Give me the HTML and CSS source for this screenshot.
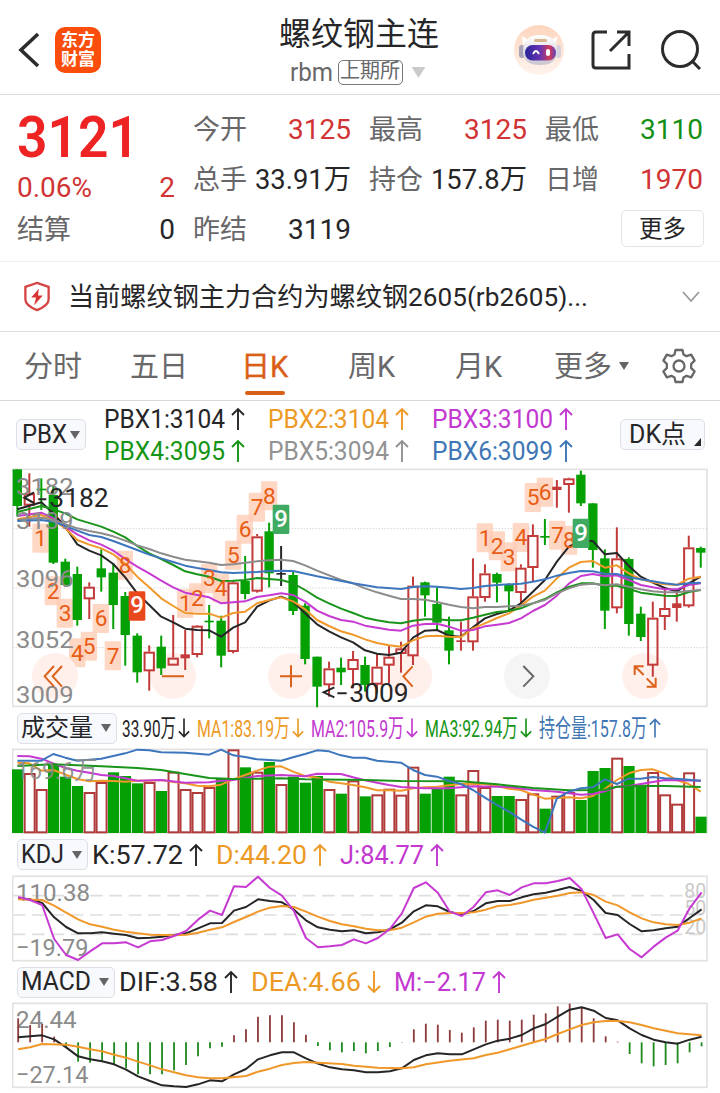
FILE: index.html
```html
<!DOCTYPE html>
<html lang="zh-CN">
<head>
<meta charset="utf-8">
<title>螺纹钢主连</title>
<link rel="stylesheet" href="styles.css">
</head>
<body>
<svg class="defs" aria-hidden="true">
  <symbol id="up" viewBox="0 0 14 24"><path d="M7 23V2M1 8l6-6 6 6"/></symbol>
  <symbol id="down" viewBox="0 0 14 24"><path d="M7 1v21M1 16l6 6 6-6"/></symbol>
  <symbol id="tri" viewBox="0 0 10 8"><path d="M0 0h10L5 8z"/></symbol>
</svg>

<header class="topbar">
  <svg class="back" viewBox="0 0 22 38"><path d="M20 3L3 19l17 16"/></svg>
  <div class="logo"><span>东方</span><span>财富</span></div>
  <div class="heading">
    <h1>螺纹钢主连</h1>
    <div class="sub"><span data-width="43">rbm</span><span class="exchange">上期所</span><svg class="tri-light"><use href="#tri"/></svg></div>
  </div>
  <svg class="robot" viewBox="0 0 50 50">
    <defs>
      <linearGradient id="visor"><stop offset="0" stop-color="#28249a"/><stop offset=".5" stop-color="#6b35b0"/><stop offset=".8" stop-color="#d23c58"/><stop offset="1" stop-color="#5a3fc0"/></linearGradient>
      <linearGradient id="halo" x2="0" y2="1"><stop offset="0" stop-color="#fdd5bd"/><stop offset="1" stop-color="#fff4ee"/></linearGradient>
      <linearGradient id="helmet" x2="0" y2="1"><stop offset="0" stop-color="#fff"/><stop offset="1" stop-color="#c9c5d2"/></linearGradient>
    </defs>
    <circle cx="25" cy="25" r="25" fill="url(#halo)"/>
    <path d="M9 20L8 11l6 4zM41 20l3-9-7 4z" fill="#fff"/>
    <rect x="5" y="20" width="6" height="13" rx="3" fill="#a7a3b5"/><rect x="42" y="20" width="5" height="13" rx="2.500" fill="#d5d1de"/>
    <path d="M9 26C9 15 15 10 26 10s17 5 17 16c0 10-6 14-17 14S9 36 9 26z" fill="url(#helmet)"/>
    <rect x="20" y="14" width="13" height="3" rx="1.500" fill="#d8b68d"/>
    <rect x="11" y="20" width="31" height="15.500" rx="7.700" fill="url(#visor)"/>
    <path d="M19 29q3-6 6 0" fill="none" stroke="#fff" stroke-width="1.800"/><rect x="32" y="24" width="4" height="7" rx="2" fill="#fff"/>
  </svg>
  <svg class="share" viewBox="0 0 40 40"><path d="M16 2H5q-3 0-3 3v30q0 3 3 3h33V24M26 2h12v14M38 2L19 21"/></svg>
  <svg class="search" viewBox="0 0 40 40"><circle cx="19" cy="19" r="17.500"/><path d="M31 31l8 8"/></svg>
</header>

<section class="quote">
  <div class="col">
    <div class="cell last up"><b data-width="122">3121</b></div>
    <div class="cell up change"><span data-width="75">0.06%</span><span>2</span></div>
    <div class="cell"><label>结算</label><span>0</span></div>
  </div>
  <div class="col">
    <div class="cell"><label>今开</label><span class="up">3125</span></div>
    <div class="cell"><label>总手</label><span data-width="96">33.91万</span></div>
    <div class="cell"><label>昨结</label><span>3119</span></div>
  </div>
  <div class="col">
    <div class="cell"><label>最高</label><span class="up">3125</span></div>
    <div class="cell"><label>持仓</label><span data-width="96">157.8万</span></div>
  </div>
  <div class="col">
    <div class="cell"><label>最低</label><span class="down">3110</span></div>
    <div class="cell"><label>日增</label><span class="up">1970</span></div>
    <div class="cell end"><button class="more">更多</button></div>
  </div>
</section>

<section class="notice">
  <svg class="shield" viewBox="0 0 28 32"><path d="M14 2l12 4v13q0 6-12 11Q2 25 2 19V6z"/><path class="bolt" d="M16 8l-8 9h5l-2 8 9-10h-5z"/></svg>
  <span class="notice-text" data-width="520">当前螺纹钢主力合约为螺纹钢2605(rb2605)...</span>
  <svg class="chev" viewBox="0 0 18 12"><path d="M1 1l8 9 8-9"/></svg>
</section>

<nav class="tabs">
  <a>分时</a><a>五日</a><a class="active">日K</a><a>周K</a><a>月K</a>
  <a>更多<svg class="tri"><use href="#tri"/></svg></a>
  <svg class="gear" viewBox="0 0 36 36"><path d="M14.500 2h7l1 4.500 3 1.700 4.700-1.600 3.400 6-3.400 3.200v4.400l3.400 3.200-3.400 6-4.700-1.600-3 1.700-1 4.500h-7l-1-4.500-3-1.700-4.700 1.600-3.400-6 3.400-3.200v-4.400l-3.400-3.200 3.400-6 4.700 1.600 3-1.700z"/><circle cx="18" cy="18" r="5.500"/></svg>
</nav>

<section class="pbx">
  <button class="pick"><span data-width="45">PBX</span><svg class="tri"><use href="#tri"/></svg></button>
  <div class="pbx-grid">
    <span class="c-black"><i data-width="121">PBX1:3104</i><svg class="arrow"><use href="#up"/></svg></span>
    <span class="c-orange"><i data-width="121">PBX2:3104</i><svg class="arrow"><use href="#up"/></svg></span>
    <span class="c-magenta"><i data-width="121">PBX3:3100</i><svg class="arrow"><use href="#up"/></svg></span>
    <span class="c-green"><i data-width="121">PBX4:3095</i><svg class="arrow"><use href="#up"/></svg></span>
    <span class="c-gray"><i data-width="121">PBX5:3094</i><svg class="arrow"><use href="#up"/></svg></span>
    <span class="c-blue"><i data-width="121">PBX6:3099</i><svg class="arrow"><use href="#up"/></svg></span>
  </div>
  <button class="pick dk"><span data-width="57">DK点</span><svg class="corner" viewBox="0 0 7 8"><path d="M7 0v8H0z"/></svg></button>
</section>

<svg class="chart" id="price" viewBox="36 24 2088 720" height="240"></svg>

<section class="legend vol">
  <button class="pick"><span data-width="72">成交量</span><svg class="tri"><use href="#tri"/></svg></button>
  <span class="c-black"><i data-width="54">33.90万</i><svg class="arrow"><use href="#down"/></svg></span>
  <span class="c-orange"><i data-width="93">MA1:83.19万</i><svg class="arrow"><use href="#down"/></svg></span>
  <span class="c-magenta"><i data-width="93">MA2:105.9万</i><svg class="arrow"><use href="#down"/></svg></span>
  <span class="c-green"><i data-width="93">MA3:92.94万</i><svg class="arrow"><use href="#down"/></svg></span>
  <span class="c-blue"><i data-width="108">持仓量:157.8万</i><svg class="arrow"><use href="#up"/></svg></span>
</section>
<svg class="chart" id="volume" viewBox="36 114 2088 258" height="86"></svg>

<section class="legend kdj">
  <button class="pick"><span data-width="43">KDJ</span><svg class="tri"><use href="#tri"/></svg></button>
  <span class="c-black"><i data-width="91">K:57.72</i><svg class="arrow"><use href="#up"/></svg></span>
  <span class="c-orange"><i data-width="91">D:44.20</i><svg class="arrow"><use href="#up"/></svg></span>
  <span class="c-magenta"><i data-width="84">J:84.77</i><svg class="arrow"><use href="#up"/></svg></span>
</section>
<svg class="chart" id="kdj" viewBox="36 120 2088 261" height="87"></svg>

<section class="legend macd">
  <button class="pick"><span data-width="70">MACD</span><svg class="tri"><use href="#tri"/></svg></button>
  <span class="c-black"><i data-width="99">DIF:3.58</i><svg class="arrow"><use href="#up"/></svg></span>
  <span class="c-orange"><i data-width="110">DEA:4.66</i><svg class="arrow"><use href="#down"/></svg></span>
  <span class="c-magenta"><i data-width="92">M:−2.17</i><svg class="arrow"><use href="#up"/></svg></span>
</section>
<svg class="chart" id="macd" viewBox="36 501 2088 264" height="88"></svg>
<script src="charts.js"></script>
</body>
</html>
```
FILE: styles.css
```css
* { box-sizing: border-box; }
body {
  margin: 0;
  width: 720px;
  height: 1093px;
  overflow: hidden;
  background: #fff;
  color: #262628;
  font-family: Roboto, "Noto Sans CJK SC", sans-serif;
}
svg { display: block; fill: none; flex: none; }
i { font-style: normal; }
.defs { width: 0; height: 0; position: absolute; }
[data-width] { display: inline-block; white-space: nowrap; transform-origin: 0 50%; flex: none; }
button { font: inherit; color: inherit; padding: 0; }

.up { color: #d13434; }
.down { color: #159015; }
.c-black { color: #262628; }
.c-orange { color: #ec9a25; }
.c-magenta { color: #c238d0; }
.c-green { color: #159415; }
.c-gray { color: #929292; }
.c-blue { color: #3f76b5; }

.topbar { height: 95px; border-bottom: 1px solid #dcdce2; display: flex; align-items: center; padding: 5px 19px 0 18px; }
.back { width: 22px; height: 38px; stroke: #2c2c2e; stroke-width: 3.6; }
.logo {
  width: 46px; height: 46px; margin-left: 15px; border-radius: 10px; background: #fb4d0b; color: #fff;
  display: flex; flex-direction: column; align-items: center; justify-content: center;
  font-size: 17px; line-height: 19px; font-weight: 700;
}
.heading { width: 300px; margin-left: 108px; margin-right: 1px; text-align: center; height: 80px; }
.heading h1 { margin: 0; font-size: 32px; font-weight: 400; line-height: 48px; }
.sub { display: flex; align-items: center; justify-content: center; height: 28px; margin-top: 1px; color: #68686a; font-size: 25px; padding-right: 3px; }
.exchange { border: 1.5px solid #77777a; border-radius: 5px; width: 65px; height: 25px; margin-left: 5px; font-size: 20px; line-height: 21px; }
.tri-light { width: 15px; height: 11px; margin-left: 8px; fill: #cacaca; }
.robot { width: 50px; height: 50px; margin-left: 4px; }
.share { width: 40px; height: 40px; margin-left: 27px; stroke: #2c2c2e; stroke-width: 3; }
.search { width: 40px; height: 40px; margin-left: 30px; stroke: #2c2c2e; stroke-width: 3; }

.quote { height: 167px; border-bottom: 1px solid #f0f0f0; padding: 10px 16px 0 17px; display: grid; grid-template-columns: repeat(4, 158px); column-gap: 18px; }
.cell { height: 50px; display: flex; align-items: center; justify-content: space-between; font-size: 28px; line-height: 40px; }
.cell label { color: #68686a; font-size: 27px; }
.last { font-size: 58px; height: 66px; padding-bottom: 2px; color: #ee2424; }
.last b { font-weight: 600; }
.change { height: 34px; }
.end { justify-content: flex-end; }
.more { width: 83px; height: 37px; margin: 0 -1px 3px 0; border: 1.5px solid #e4e4e4; border-radius: 5px; background: #fff; font-size: 23.5px; line-height: 32px; }

.notice { height: 70px; border-bottom: 1px solid #dedee0; display: flex; align-items: center; padding: 0 20px 0 23px; }
.shield { width: 28px; height: 31px; stroke: #d64545; stroke-width: 2.4; }
.shield .bolt { fill: #d93434; stroke: none; }
.notice-text { margin-left: 17px; font-size: 26.5px; line-height: 40px; }
.chev { width: 18px; height: 12px; margin-left: auto; stroke: #9a9a9c; stroke-width: 1.8; }

.tabs { height: 69px; border-bottom: 1px solid #d8d8dc; display: grid; grid-template-columns: 106px 111px 107px 107px 99px 107px 36px; padding-left: 24px; color: #68686a; font-size: 29px; align-items: center; }
.tabs a { height: 68px; line-height: 70px; display: flex; align-items: center; padding-top: 2px; }
.tabs .active { color: #d95f18; position: relative; width: 48px; -webkit-text-stroke: .4px #d95f18; }
.tabs .active::after { content: ""; position: absolute; left: 4px; bottom: 5px; width: 40px; height: 4px; border-radius: 2px; background: #d95f18; }
.tabs .tri { margin-left: 7px; margin-bottom: 3px; }
.tri { width: 10px; height: 8px; fill: #646466; }
.gear { width: 36px; height: 36px; stroke: #68686a; stroke-width: 2.3; stroke-linejoin: round; }

.pick { height: 31px; border: 1.5px solid #dcdfe6; border-radius: 5px; background: #f7f9fd; display: flex; align-items: center; padding-left: 5px; flex: none; font-size: 25px; line-height: 28px; }
.pick .tri { margin-left: auto; margin-right: 5px; }
.arrow { width: 14px; height: 24px; stroke: currentColor; stroke-width: 1.9; margin: 0 0 2px 6px; }

.pbx { height: 67px; display: flex; align-items: center; padding: 0 15px 0 16px; }
.pbx .pick { width: 70px; }
.pbx .pick.dk { width: 85px; margin-left: auto; padding-left: 8px; }
.corner { width: 7px; height: 8px; fill: #2a2a2a; margin: 14px 3px 0 auto; }
.pbx-grid { display: grid; grid-template-columns: repeat(3, 164px); grid-template-rows: 32px 32px; margin: 2px 0 0 18px; font-size: 25px; }
.pbx-grid span, .legend > span { display: flex; align-items: center; line-height: 32px; }

.chart { width: 696px; margin-left: 12px; font-family: Roboto, "Noto Sans CJK SC", sans-serif; }
.legend { display: flex; align-items: center; padding-left: 17px; font-size: 25px; }
.legend > span { margin-left: 13px; padding-top: 2px; }
.legend > .pick + span { margin-left: 4px; }
.vol { height: 40px; font-size: 24.5px; }
.vol .pick { width: 100px; padding-left: 3px; font-size: 24px; }
.vol > .pick + span { margin-left: 5px; }
.vol > span { margin-left: 8px; }
.vol .arrow { width: 12px; margin: 0 -1px 2px 2px; }
.kdj { height: 41px; }
.kdj .pick { width: 71px; padding-left: 3px; }
.macd { height: 40px; }
.macd .pick { width: 98px; padding-left: 3px; }
```
FILE: charts.js
```js
// Fit captions to the width reserved for them.
document.querySelectorAll('[data-width]').forEach(el => {
  const want = +el.dataset.width, real = el.getBoundingClientRect().width;
  el.style.transform = `scaleX(${want / real})`;
  el.style.marginRight = `${want - real}px`;
});

// All chart data is in thirds of a pixel; one column every 36 units.
const RED = '#c23a3a', GREEN = '#04a004', INK = '#262628';
const C = { k: INK, o: '#f0982a', m: '#c63ad2', g: '#1a941a', a: '#8c8c8c', b: '#3d76bd' };
const X = i => 52 + i * 35.97;
const rect = (x, y, w, h, attr) => `<rect x="${x}" y="${y}" width="${w}" height="${h}" ${attr}/>`;
const seg = (x1, y1, x2, y2, c, w, extra = '') => `<path d="M${x1} ${y1}L${x2} ${y2}" stroke="${c}" stroke-width="${w}" ${extra}/>`;
const text = (x, y, w, s, c, size = 74, extra = '') => `<text x="${x}" y="${y}" textLength="${w}" lengthAdjust="spacingAndGlyphs" font-size="${size}" fill="${c}" ${extra}>${s}</text>`;
const frame = (top, bottom) => rect(38, top, 2083, bottom - top, 'stroke="#e2e2e2" stroke-width="5"');
function line(data, color, dx = 0) {
  const pts = data.trim().split(/\s+/).map(p => p.split(':').map(Number));
  return `<polyline points="${pts.map(p => (X(p[0]) + dx) + ',' + p[1]).join(' ')}" stroke="${color}" stroke-width="6" stroke-linejoin="round"/>`;
}
const put = (id, html) => { document.getElementById(id).innerHTML = html; };

// type, high, low, body top, body bottom
const candles = `G 28 170 28 138|R 40 200 100 135|G 55 150 86 91|G 75 312 105 308|G 296 380 305 375|G 320 497 342 480|R 367 477 380 416|G 268 395 325 352|G 310 507 338 435|G 396 617 408 525|G 520 668 527 637|R 556 692 575 632|G 527 645 560 625|R 465 615 593 615|R 510 630 583 595|R 495 592 497 583|G 435 535 482 487|G 467 622 482 587|R 363 580 367 574|G 288 418 363 402|R 222 398 229 393|G 188 382 214 340|K 258 378 339 344|G 335 465 345 453|G 430 613 437 597|G 590 742 590 680|R 605 710 625 674|G 593 675 623 637|R 573 685 597 628|G 590 695 615 675|R 580 700 620 672|R 557 670 590 615|R 545 638 565 580|R 350 615 377 587|G 365 470 367 406|G 382 510 432 488|G 470 613 511 572|R 485 572 541 546|R 295 572 409 545|R 313 425 340 412|G 338 427 342 368|G 370 452 375 394|R 313 430 323 397|R 193 365 225 322|G 177 255 228 233|R 60 143 80 90|R 53 158 55 73|G 32 138 44 130|G 130 323 130 270|G 268 507 295 452|R 202 460 295 443|G 292 527 297 492|G 440 543 461 531|R 425 650 473 615|R 382 510 444 469|R 397 485 430 444|R 227 443 262 437|G 260 323 264 278`.split('|');
// countdown marks: x, y, number
const marks = [[122,234,1],[159,392,2],[195,459,3],[232,578,4],[267,558,5],[303,475,6],[339,587,7],[375,315,8],[556,430,1],[592,413,2],[628,355,3],[663,383,4],[700,285,5],[735,207,6],[771,141,7],[808,107,8],[1455,233,1],[1491,257,2],[1527,290,3],[1563,232,4],[1599,112,5],[1635,96,6],[1672,225,7],[1708,240,8]];

let s = frame(28, 739);
for (const y of [206, 384, 563]) s += seg(38, y, 2120, y, '#c4c4c4', 3, 'stroke-dasharray="3 6"');
for (const [x, y] of marks) s += rect(x - 25, y - 43, 49, 87, 'fill="#ffcdb6" fill-opacity=".8" rx="3"');
s += [[165,'#fff0eb'],[519,'#fff0eb'],[873,'#fff0eb'],[1228,'#fff0eb'],[1581,'#f5f5f5'],[1935,'#fff0eb']].map(([x, f]) => `<circle cx="${x}" cy="648" r="69" fill="${f}"/>`).join('');
candles.forEach((c, i) => {
  const [t, ...v] = c.split(' '), [hi, lo, a, b] = v.map(Number), x = X(i);
  const col = { R: RED, G: GREEN, K: INK }[t];
  if (t === 'R' && b - a > 14) {
    s += seg(x, hi, x, a, col, 6) + seg(x, b, x, lo, col, 6) + rect(x - 14, a + 3, 28, Math.max(4, b - a - 4), `stroke="${col}" stroke-width="6"`);
  } else {
    s += seg(x, hi, x, lo, col, 6) + rect(x - 14, a, 28, b - a, `fill="${col}"`);
  }
});
s += line('0:148 2:127 3:160 4:200 5:253 6:272 7:286 8:312 9:352 10:400 11:435 12:470 13:487 14:506 15:510 16:511 17:530 18:503 19:487 20:440 21:422 22:410 23:425 24:460 25:493 26:514 27:532 28:547 29:571 30:581 31:585 32:578 33:533 34:512 35:510 36:527 37:530 38:502 39:475 40:462 41:452 42:430 43:395 44:360 45:305 46:260 47:243 48:243 49:283 50:279 51:318 52:350 53:368 54:384 55:394 56:370 57:350', C.k);
s += line('0:178 2:165 3:180 4:205 5:240 6:254 7:265 8:283 9:312 10:350 11:382 12:415 13:438 14:459 15:461 16:461 17:473 18:459 19:455 20:430 21:420 22:412 23:424 24:448 25:480 26:498 27:514 28:524 29:538 30:549 31:556 32:560 33:541 34:529 35:527 36:530 37:531 38:505 39:490 40:474 41:460 42:437 43:410 44:392 45:355 46:323 47:306 48:303 49:323 50:316 51:340 52:358 53:367 54:373 55:375 56:356 57:350', C.o);
s += line('0:168 2:158 3:175 4:200 5:223 6:241 7:254 8:272 9:297 10:320 11:340 12:362 13:382 14:398 15:405 16:412 17:430 18:427 19:424 20:411 21:406 22:400 23:405 24:425 25:452 26:468 27:480 28:485 29:497 30:503 31:509 32:512 33:497 34:492 35:491 36:500 37:512 38:510 39:499 40:494 41:489 42:475 43:453 44:435 45:407 46:371 47:348 48:342 49:349 50:346 51:360 52:375 53:382 54:388 55:388 56:375 57:370', C.m);
s += line('0:156 2:138 3:148 4:160 5:178 7:200 8:215 9:232 10:258 11:280 12:297 13:315 14:334 15:343 16:350 17:363 18:362 19:360 20:354 21:357 22:360 23:370 24:390 25:413 26:430 27:446 28:459 29:473 30:481 31:487 32:490 33:482 34:478 35:478 36:481 37:481 38:473 39:464 40:456 41:453 42:445 43:430 44:417 45:397 46:381 47:370 48:370 49:377 50:377 51:387 52:398 53:403 54:407 55:408 56:396 57:390', C.g);
s += line('0:180 2:173 3:180 5:205 6:213 7:220 8:229 9:242 10:256 11:267 12:280 13:290 14:299 16:308 17:315 18:313 20:304 21:301 22:299 23:303 24:316 25:332 27:360 28:370 29:385 30:397 31:407 32:417 33:417 34:419 35:426 36:434 37:441 38:445 39:441 40:441 41:439 42:437 43:430 44:420 45:400 46:385 47:374 48:371 49:376 50:373 51:380 52:388 53:394 54:397 55:397 56:393 57:390', C.a);
s += line('0:183 2:180 3:185 5:212 6:225 7:231 8:243 10:270 11:284 12:295 13:306 14:317 15:324 16:330 17:337 18:339 20:336 21:333 22:332 23:333 25:349 28:370 29:376 30:382 32:387 33:381 34:379 35:380 36:383 37:387 38:384 39:378 40:375 42:371 43:365 44:358 45:347 46:339 47:333 48:334 49:341 50:342 51:352 52:358 53:364 54:370 55:374 56:370 57:368', C.b);
for (const [x, y, n] of marks) s += `<text x="${x}" y="${y + 24}" font-size="68" text-anchor="middle" fill="#e85c14">${n}</text>`;
for (const [x, y, f] of [[411,438,'#e8481c'],[843,178,'#3fab62'],[1743,220,'#3fab62']])
  s += rect(x - 25, y - 44, 50, 88, `fill="${f}" rx="4"`) + `<text x="${x}" y="${y + 22}" font-size="72" text-anchor="middle" fill="#fff" font-weight="500">9</text>`;
for (const [y, n] of [[104,3182],[207,3139],[382,3096],[563,3052],[728,3009]]) s += text(48, y, 173, n, '#8b8b8b');
s += text(148, 140, 178, '3182', INK, 76) + `<path d="M102 97L73 113l29 16M115 118h24" stroke="${INK}" stroke-width="6"/>`;
s += text(1048, 725, 178, '3009', INK, 76) + `<path d="M1003 682l-32 15 32 15M1012 700h28" stroke="${INK}" stroke-width="6"/>`;
s += `<g stroke="#dc621c" stroke-width="6"><path d="M162 618l-28 31 28 31M186 618l-28 31 28 31M486 649h66M840 649h66M873 616v66M1238 619l-28 30 28 31M1931 645l-26-26M1904 645v-26h27M1940 655l26 26M1967 653v27h-27"/><path stroke="#68686a" d="M1570 618l30 31-30 31"/></g>`;
put('price', s);

// Volume
const vol = 'G178 R190 R238 G165 G200 G228 R247 R217 G187 G198 G220 R217 G243 R186 R238 R247 R232 G205 R119 G172 R186 G156 R223 G200 G218 G198 R238 G251 R212 G259 R254 R237 R255 R171 G251 G235 G200 R254 R181 R232 G258 G258 R268 R251 G296 R258 R247 G270 G183 G174 R144 G168 G224 R187 R254 R282 R188 G320'.split(' ');
s = frame(118, 368);
vol.forEach((v, i) => {
  const y = +v.slice(1), x = X(i);
  s += v[0] === 'G' ? rect(x - 16, y, 33.5, 369 - y, `fill="${GREEN}"`) : rect(x - 14, y + 2, 30, 365 - y, 'stroke="#b03a3a" stroke-width="6"');
});
s += line('0:158 1:160 2:182 3:180 4:193 5:207 6:214 7:212 8:213 9:215 10:212 11:212 12:210 13:216 14:220 15:227 16:229 17:224 18:208 19:195 20:182 21:170 22:169 23:185 24:198 25:203 26:215 27:220 28:225 29:232 30:241 31:241 32:242 33:235 34:232 35:230 36:226 37:222 38:221 39:222 40:228 41:236 42:240 43:254 44:266 45:264 46:262 47:265 48:258 49:237 50:210 51:190 52:180 53:178 54:190 55:210 56:222 57:245', C.o);
s += line('0:138 1:139 2:146 3:160 4:174 5:182 6:188 7:195 8:198 9:205 10:212 12:210 14:218 16:217 17:212 18:210 20:198 22:195 24:199 25:191 27:192 28:202 29:211 30:218 31:225 32:231 34:235 36:235 38:229 41:231 43:240 45:245 47:254 48:252 49:244 50:230 51:228 52:222 54:210 57:212', C.m);
s += line('0:168 3:163 7:169 10:174 12:180 14:192 16:204 18:207 20:206 22:205 24:208 29:210 32:213 37:214 40:223 43:234 46:241 49:240 50:230 52:228 54:228 57:231', C.g);
s += line('0:152 2:152 3:132 4:143 5:152 7:146 8:138 9:130 10:119 11:121 12:127 14:128 16:134 17:119 18:136 19:141 20:148 22:152 23:142 24:132 25:121 26:124 27:136 28:143 29:143 30:152 32:158 33:180 34:195 35:200 36:213 37:222 38:240 39:263 40:285 41:305 42:328 43:350 44:368 45:265 46:245 47:235 48:232 49:208 50:222 51:206 52:206 53:201 54:205 55:206 57:212', C.b);
s += text(48, 207, 244, '169.6万', '#8b8b8b', 74, 'opacity=".9"');
put('volume', s);

// KDJ
s = frame(124, 377);
for (const y of [182, 240, 298]) s += seg(38, y, 2120, y, '#dedede', 5, 'stroke-dasharray="38 20"');
s += text(48, 198, 222, '110.38', '#8b8b8b') + text(48, 363, 217, '−19.79', '#8b8b8b');
for (const [y, n] of [[190,80],[240,50],[298,20]]) s += text(2053, y, 66, n, '#cacaca', 60);
s += line('0:190 1:193 2:204 3:247 4:276 5:295 6:295 7:292 8:296 9:300 10:310 11:308 12:305 13:300 14:295 15:280 16:265 17:264 18:227 19:216 20:193 21:198 22:202 23:224 24:256 25:277 26:284 27:289 28:286 29:295 30:292 31:283 32:263 33:229 34:211 35:214 36:231 37:238 38:228 39:205 40:198 41:198 42:187 43:178 44:173 45:165 46:156 47:168 48:195 49:234 50:240 51:267 52:289 53:286 54:280 55:275 56:249 57:223', C.k, 2.5);
s += line('0:193 2:195 3:212 4:233 5:253 6:268 7:275 8:284 9:290 10:295 11:299 12:300 13:301 14:299 15:293 16:284 17:277 18:261 19:246 20:230 21:218 22:213 23:216 24:230 25:245 26:258 27:268 28:274 29:281 30:286 31:286 32:278 33:262 34:245 35:236 36:234 37:234 38:232 39:224 40:213 41:210 42:203 43:194 44:188 45:182 46:174 47:172 48:180 49:200 50:211 51:232 52:250 53:262 54:268 55:270 56:263 57:250', C.o, 2.5);
s += line('0:186 1:195 2:210 3:312 4:360 5:375 6:349 7:325 8:325 9:322 10:337 11:319 12:315 13:303 14:288 15:254 16:227 17:240 18:154 19:156 20:125 21:159 22:182 23:228 24:309 25:337 26:334 27:330 28:313 29:325 30:309 31:282 32:235 33:159 34:142 35:173 36:230 37:243 38:215 39:172 40:166 41:180 42:157 43:145 44:145 45:138 46:129 47:163 48:235 49:309 50:298 51:342 52:367 53:335 54:308 55:287 56:220 57:172', C.m, 2.5);
put('kdj', s);

// MACD histogram ends, measured against the zero axis at 623
const hist = [550,570,567,605,637,680,683,677,690,700,718,718,718,706,690,664,640,635,601,583,545,541,541,562,599,633,646,652,648,655,648,636,623,583,566,569,585,593,577,557,554,557,554,539,535,514,506,517,550,604,620,657,685,694,690,685,652,634];
s = frame(505, 757) + text(48, 580, 182, '24.44', '#8b8b8b') + text(48, 745, 217, '−27.14', '#8b8b8b');
hist.forEach((v, i) => { s += seg(X(i) + 2.5, 622, X(i) + 2.5, v, v < 623 ? '#8e3c3c' : '#208a20', 5.5); });
s += line('0:607 2:601 3:613 4:637 5:664 6:673 7:679 8:688 9:704 10:724 11:738 12:751 13:754 14:756 15:748 16:736 17:739 18:718 19:702 20:673 21:661 22:652 23:652 24:670 25:686 26:697 27:703 28:706 29:712 30:712 31:709 32:700 33:675 34:661 35:655 36:658 37:658 38:643 39:628 40:617 41:611 42:600 43:580 44:567 45:545 46:524 47:517 48:527 49:549 50:556 51:580 52:600 53:614 54:622 55:626 56:614 57:605', C.k, 2.5);
s += line('0:643 1:637 2:627 4:629 5:635 6:643 7:649 8:659 9:668 10:680 11:691 12:703 13:712 14:721 15:727 16:730 17:730 19:723 20:710 21:701 22:690 23:684 24:681 25:683 27:687 28:692 30:698 32:700 33:697 34:688 36:677 38:670 39:660 40:653 41:643 43:622 44:612 45:597 46:583 47:570 48:562 49:558 50:558 51:562 52:570 53:580 54:587 55:595 56:598 57:601', C.o, 2.5);
put('macd', s);
```
